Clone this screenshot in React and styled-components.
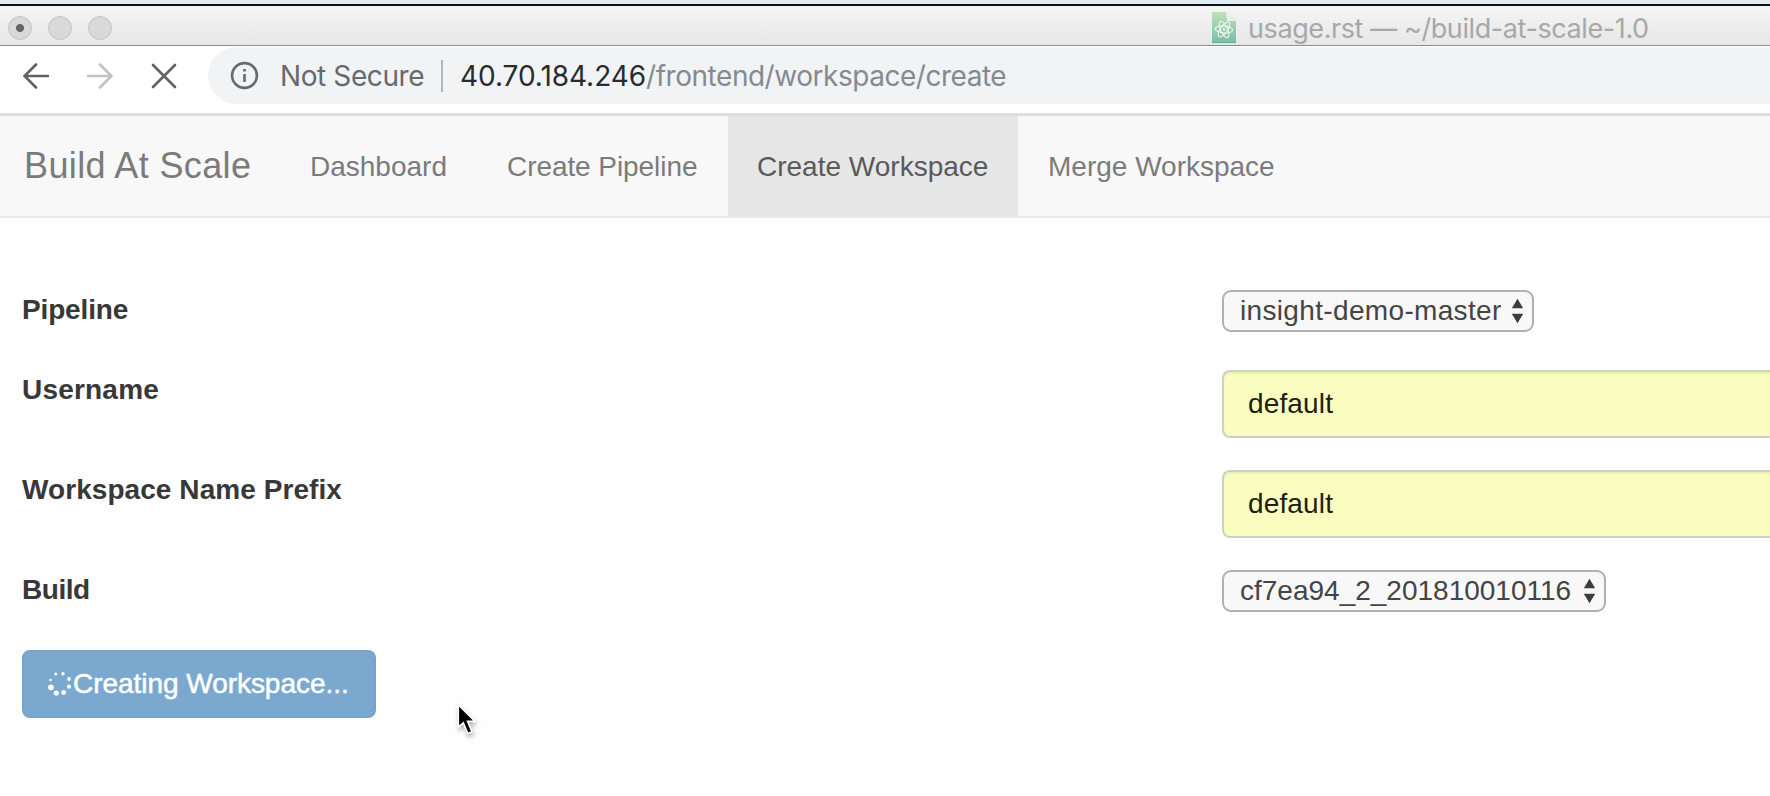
import React from 'react';
import styled, { createGlobalStyle } from 'styled-components';

const GlobalStyle = createGlobalStyle`
  *, *::before, *::after { box-sizing: border-box; }
  body { margin: 0; background: #fff; overflow: hidden; font-family: "Liberation Sans", Arial, sans-serif; }
`;

const Screen = styled.div`
  position: relative;
  width: 1770px;
  height: 796px;
  overflow: hidden;
  background: #fefefe;
  display: flex;
  flex-direction: column;
`;

const Desktop = styled.div`
  flex: none;
  height: 6px;
  background: #e1ebf4;
  border-bottom: 2px solid #10121b;
`;

const TitleBar = styled.header`
  flex: none;
  height: 40px;
  display: flex;
  align-items: center;
  padding: 5px 0 0 8px;
  background: linear-gradient(#f5f5f5, #e7e7e7);
  border-bottom: 1px solid #8c8c8c;
`;

const Lights = styled.div`
  display: flex;
  gap: 16px;
  width: 1204px;
`;

const Light = styled.span`
  width: 24px;
  height: 24px;
  border-radius: 50%;
  border: 1px solid #c4c4c4;
  background: ${(p) => (p.$edited ? 'radial-gradient(circle, #666 0 3.6px, #d9d9d9 4.4px)' : '#d9d9d9')};
`;

const FileName = styled.span`
  margin-left: 12px;
  padding-top: 2px;
  font: 27px/34px Inter, sans-serif;
  letter-spacing: ${(p) => p.$track}px;
  color: #a8a8a8;
  white-space: nowrap;
`;

const Toolbar = styled.div`
  flex: none;
  height: 67px;
  display: flex;
  background: #fff;
`;

const NavIcons = styled.div`
  display: flex;
  width: 208px;
  height: 60px;
  align-items: center;
`;

const AddressBar = styled.div`
  flex: 1;
  height: 57px;
  margin-top: 1px;
  display: flex;
  align-items: center;
  padding: 0 0 0 22px;
  border-radius: 29px 0 0 29px;
  background: #f1f3f5;
  font: 28px/34px Inter, sans-serif;
  white-space: nowrap;
`;

const Security = styled.span`
  width: 148px;
  margin-left: 20px;
  color: #66696d;
  letter-spacing: ${(p) => p.$track}px;
`;

const Divider = styled.span`
  width: 2px;
  height: 32px;
  margin: 0 17px 0 13px;
  background: #b4b6b9;
`;

const Host = styled.span`
  color: #292b2e;
  letter-spacing: ${(p) => p.$track}px;
`;

const Path = styled.span`
  color: #868a8f;
  letter-spacing: ${(p) => p.$track}px;
`;

const Navbar = styled.nav`
  flex: none;
  height: 105px;
  display: flex;
  background: #f8f8f8;
  border-top: 3px solid #dedede;
  border-bottom: 2px solid #e9e9e9;
`;

const Brand = styled.a`
  width: 280px;
  padding-left: 24px;
  font-size: 36px;
  line-height: 99px;
  letter-spacing: ${(p) => p.$track}px;
  color: #7b7b7b;
  white-space: nowrap;
`;

const Tab = styled.a`
  width: ${(p) => p.$width}px;
  padding-left: ${(p) => p.$inset || 29}px;
  font-size: 28px;
  line-height: 101px;
  letter-spacing: ${(p) => p.$track}px;
  color: ${(p) => (p.$active ? '#5a5a5a' : '#7b7b7b')};
  background: ${(p) => (p.$active ? '#e6e6e6' : 'transparent')};
  white-space: nowrap;
`;

const Form = styled.form`
  padding: 72px 0 0 22px;
`;

const Field = styled.div`
  display: flex;
  align-items: flex-start;
  height: ${(p) => p.$height}px;
`;

const Label = styled.label`
  width: 1200px;
  padding-top: 4px;
  font-size: 28px;
  line-height: 32px;
  font-weight: 700;
  color: #383838;
  letter-spacing: ${(p) => p.$track}px;
`;

const Select = styled.div`
  width: ${(p) => p.$width}px;
  height: 42px;
  display: flex;
  align-items: center;
  justify-content: space-between;
  padding: 0 8px 1px 16px;
  border: 2px solid #b0b0b0;
  border-radius: 9px;
  background: #f8f8f8;
  color: #444;
  font-size: 28px;
  line-height: 32px;
  letter-spacing: ${(p) => p.$track}px;
  white-space: nowrap;
`;

const Input = styled.div`
  flex: 1;
  height: 68px;
  display: flex;
  align-items: center;
  padding-left: 24px;
  border: 2px solid #cfd0c4;
  border-right: 0;
  border-radius: 8px 0 0 8px;
  background: #f9fdbf;
  box-shadow: inset 0 2px 2px rgba(0, 0, 0, 0.06);
  color: #1f2010;
  font-size: 28px;
  letter-spacing: ${(p) => p.$track}px;
`;

const Button = styled.button`
  display: flex;
  align-items: center;
  width: 354px;
  height: 68px;
  padding: 0 0 0 24px;
  border: 2px solid #76a3cb;
  border-radius: 8px;
  background: #7ba8cf;
  color: #fff;
  font: 28px/32px "Liberation Sans", Arial, sans-serif;
  -webkit-text-stroke: 0.5px #fff;
  letter-spacing: ${(p) => p.$track}px;
  white-space: nowrap;
`;

const Pointer = styled.svg`
  position: absolute;
  left: 452px;
  top: 700px;
  filter: drop-shadow(1px 3px 2px rgba(0, 0, 0, 0.3));
`;

const ToolIcon = styled.svg`
  flex: none;
  margin-left: ${(p) => p.$gap}px;
  fill: none;
  stroke: ${(p) => p.$color};
  stroke-width: 2.6;
  stroke-linecap: round;
`;

const AtomFile = () => (
  <svg width="24" height="32" viewBox="0 0 24 32">
    <defs>
      <linearGradient id="doc" x1="0" y1="0" x2="0" y2="1">
        <stop offset="0" stopColor="#bfe0b8" />
        <stop offset="1" stopColor="#79bea5" />
      </linearGradient>
    </defs>
    <path d="M0 0H14L24 9V31H0Z" fill="url(#doc)" />
    <path d="M14 0L24 9H15Z" fill="#e7f1e6" />
    <path d="M0 30.5H24" stroke="#6aa993" />
    <g fill="none" stroke="#eef8f2" strokeWidth="1.1">
      <ellipse cx="12" cy="17.5" rx="8.8" ry="3.4" transform="rotate(5 12 17.5)" />
      <ellipse cx="12" cy="17.5" rx="8.8" ry="3.4" transform="rotate(65 12 17.5)" />
      <ellipse cx="12" cy="17.5" rx="8.8" ry="3.4" transform="rotate(125 12 17.5)" />
    </g>
    <circle cx="12" cy="17.5" r="1.2" fill="#eef8f2" />
  </svg>
);

const Arrows = () => (
  <svg width="13" height="26" viewBox="0 0 13 26" fill="#3c3c3c">
    <path d="M0.8 10.2L6.5 0.8L12.2 10.2Z" />
    <path d="M0.8 15.8H12.2L6.5 25.2Z" />
  </svg>
);

const Spinner = () => (
  <svg width="25" height="26" viewBox="0 0 25 26" fill="#fff">
    <circle cx="7.7" cy="3" r="1.5" />
    <circle cx="15" cy="2.7" r="1.7" />
    <circle cx="2.5" cy="9" r="1.3" />
    <circle cx="2.9" cy="16.3" r="2.9" />
    <circle cx="8.3" cy="22" r="2.6" />
    <circle cx="15.7" cy="21.5" r="2.4" />
    <circle cx="21" cy="15.7" r="2.1" />
    <circle cx="21" cy="8" r="1.9" />
  </svg>
);

export default function App() {
  return (
    <Screen>
      <GlobalStyle />
      <Desktop />
      <TitleBar>
        <Lights>
          <Light $edited />
          <Light />
          <Light />
        </Lights>
        <AtomFile />
        <FileName $track={-0.41}>usage.rst — ~/build-at-scale-1.0</FileName>
      </TitleBar>
      <Toolbar>
        <NavIcons>
          <ToolIcon $gap={23} $color="#5f6266" width="26" height="26" viewBox="0 0 26 26">
            <path d="M25 13H2M13 1.5L1.5 13L13 24.5" />
          </ToolIcon>
          <ToolIcon $gap={38} $color="#c1c2c4" width="26" height="26" viewBox="0 0 26 26">
            <path d="M1 13H24M13 1.5L24.5 13L13 24.5" />
          </ToolIcon>
          <ToolIcon $gap={38} $color="#5f6266" width="26" height="26" viewBox="0 0 26 26">
            <path d="M2 2L24 24M24 2L2 24" />
          </ToolIcon>
        </NavIcons>
        <AddressBar>
          <svg width="30" height="30" viewBox="0 0 30 30" fill="none" stroke="#66696d" strokeWidth="2.6">
            <circle cx="14.5" cy="14.5" r="12.4" />
            <path d="M14.5 13V21M14.5 8V10.5" />
          </svg>
          <Security $track={-0.4}>Not Secure</Security>
          <Divider />
          <Host $track={-0.05}>40.70.184.246</Host>
          <Path $track={-0.47}>/frontend/workspace/create</Path>
        </AddressBar>
      </Toolbar>
      <Navbar>
        <Brand $track={0.37}>Build At Scale</Brand>
        <Tab $width={198} $track={0} $inset={30}>Dashboard</Tab>
        <Tab $width={250} $track={-0.07}>Create Pipeline</Tab>
        <Tab $width={290} $track={0} $active>Create Workspace</Tab>
        <Tab $width={290} $track={0} $inset={30}>Merge Workspace</Tab>
      </Navbar>
      <Form>
        <Field $height={80}>
          <Label $track={-0.15}>Pipeline</Label>
          <Select $width={312} $track={0.34}>insight-demo-master<Arrows /></Select>
        </Field>
        <Field $height={100}>
          <Label $track={0.2}>Username</Label>
          <Input $track={0.15}>default</Input>
        </Field>
        <Field $height={100}>
          <Label $track={0.07}>Workspace Name Prefix</Label>
          <Input $track={0.15}>default</Input>
        </Field>
        <Field $height={80}>
          <Label $track={-0.45}>Build</Label>
          <Select $width={384} $track={0}>cf7ea94_2_201810010116<Arrows /></Select>
        </Field>
        <Button type="button" $track={-0.04}><Spinner />Creating Workspace...</Button>
      </Form>
      <Pointer width="32" height="42" viewBox="0 0 32 42">
        <path d="M6.3 4.6V27L11.3 22.8L15.8 33.5L20 31.8L15.6 21.4H23Z" fill="#000" stroke="#fff" strokeWidth="1.6" />
      </Pointer>
    </Screen>
  );
}
